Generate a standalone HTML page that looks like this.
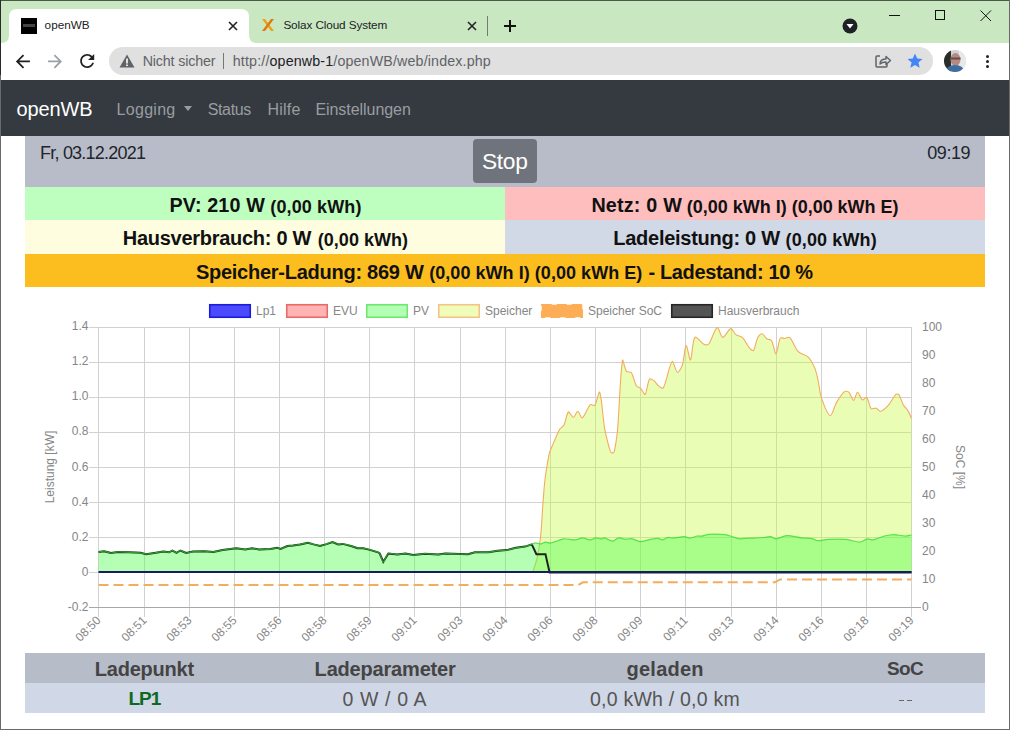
<!DOCTYPE html>
<html><head><meta charset="utf-8"><style>
*{box-sizing:border-box}
html,body{margin:0;padding:0;width:1010px;height:730px;overflow:hidden;background:#fff;font-family:"Liberation Sans",sans-serif}
.abs{position:absolute}
.t{position:absolute;line-height:1;white-space:pre;font-family:"Liberation Sans",sans-serif}
#tabs{left:0;top:0;width:1010px;height:43px;background:#c9e8c2}
#toolbar{left:0;top:43px;width:1010px;height:37px;background:#fff}
#omni{left:109px;top:47px;width:824px;height:28px;border-radius:14px;background:#dfe0df}
#nav{left:0;top:80px;width:1010px;height:56px;background:#343a40}
.chart{position:absolute;left:0;top:287px}
</style></head><body>
<div id="tabs" class="abs"></div>
<svg class="abs" style="left:0;top:0" width="260" height="44" viewBox="0 0 260 44">
<path d="M1,43 Q9,43 9,35 L9,17 Q9,9 17,9 L241,9 Q249,9 249,17 L249,35 Q249,43 257,43 Z" fill="#fff"/>
</svg>
<div class="abs" style="left:21px;top:18px;width:16px;height:16px;background:#000"><div class="abs" style="left:2px;top:6px;width:12px;height:3px;background:#444;filter:blur(0.7px)"></div></div>
<svg class="abs" style="left:228px;top:21px" width="10" height="10"><path d="M1,1 L9,9 M9,1 L1,9" stroke="#222" stroke-width="1.6"/></svg>
<svg class="abs" style="left:260px;top:17px" width="16" height="16" viewBox="0 0 16 16"><path d="M2,2 L5,2 L14,14 L11,14 Z" fill="#f0a010"/><path d="M14,2 L11,2 L2,14 L5,14 Z" fill="#e07808"/></svg>
<svg class="abs" style="left:467px;top:21px" width="10" height="10"><path d="M1,1 L9,9 M9,1 L1,9" stroke="#222" stroke-width="1.6"/></svg>
<div class="abs" style="left:487px;top:16px;width:1px;height:20px;background:#6e7e6a"></div>
<svg class="abs" style="left:503px;top:19px" width="14" height="14"><path d="M7,1 L7,13 M1,7 L13,7" stroke="#111" stroke-width="2"/></svg>
<svg class="abs" style="left:842px;top:18px" width="16" height="16"><circle cx="8" cy="8" r="7.5" fill="#202124"/><path d="M4.5,6 L11.5,6 L8,10.5 Z" fill="#fff"/></svg>
<div class="abs" style="left:889px;top:15px;width:11px;height:1px;background:#111"></div>
<div class="abs" style="left:935px;top:10px;width:10px;height:10px;border:1px solid #111"></div>
<svg class="abs" style="left:980px;top:10px" width="12" height="12"><path d="M0.5,0.5 L11,11 M11,0.5 L0.5,11" stroke="#111" stroke-width="1"/></svg>
<div id="toolbar" class="abs"></div>
<svg class="abs" style="left:0;top:43px" width="110" height="37" viewBox="0 43 110 37">
<g transform="translate(12.4,50.9) scale(0.875)"><path d="M20 11H7.83l5.59-5.59L12 4l-8 8 8 8 1.41-1.41L7.83 13H20v-2z" fill="#202124"/></g>
<g transform="translate(44.5,50.9) scale(0.875)"><path d="M12 4l-1.41 1.41L16.17 11H4v2h12.17l-5.58 5.59L12 20l8-8z" fill="#9aa0a6"/></g>
<g transform="translate(76.7,50.4) scale(0.875)"><path d="M17.65 6.35C16.2 4.9 14.21 4 12 4c-4.42 0-7.99 3.58-7.99 8s3.57 8 7.99 8c3.730 0 6.84-2.55 7.73-6h-2.08c-.82 2.33-3.04 4-5.65 4-3.31 0-6-2.690-6-6s2.69-6 6-6c1.66 0 3.14.69 4.22 1.78L13 11h7V4l-2.35 2.35z" fill="#202124"/></g>
</svg>
<div id="omni" class="abs"></div>
<svg class="abs" style="left:119px;top:54px" width="16" height="14" viewBox="0 0 16 14"><path d="M8,0.5 L15.5,13.5 L0.5,13.5 Z" fill="#5f6368"/><rect x="7.2" y="4.5" width="1.6" height="5" fill="#fff"/><rect x="7.2" y="10.5" width="1.6" height="1.6" fill="#fff"/></svg>
<div class="abs" style="left:223px;top:53px;width:1px;height:16px;background:#777"></div>
<svg class="abs" style="left:874px;top:52px" width="18" height="18" viewBox="0 0 18 18"><path d="M6,4 L3,4 Q2,4 2,5 L2,14 Q2,15 3,15 L12,15 Q13,15 13,14 L13,12" fill="none" stroke="#5f6368" stroke-width="1.5"/><path d="M6,12 Q6,7 12,7 L12,4.5 L16.5,8.5 L12,12.5 L12,10 Q8,10 6,12 Z" fill="none" stroke="#5f6368" stroke-width="1.4" stroke-linejoin="round"/></svg>
<svg class="abs" style="left:906px;top:52px" width="18" height="18" viewBox="0 0 18 18"><path d="M9,1.5 L11.2,6.6 L16.5,7 L12.4,10.5 L13.7,15.8 L9,12.9 L4.3,15.8 L5.6,10.5 L1.5,7 L6.8,6.6 Z" fill="#4285f4"/></svg>
<svg class="abs" style="left:944px;top:50px" width="22" height="22" viewBox="0 0 22 22"><defs><clipPath id="avc"><circle cx="11" cy="11" r="11"/></clipPath></defs><g clip-path="url(#avc)"><rect width="22" height="22" fill="#cfd2d4"/><rect x="0" y="0" width="7" height="22" fill="#2a2e2a"/><rect x="15" y="0" width="7" height="22" fill="#e8e8e8"/><ellipse cx="11.5" cy="9.5" rx="5" ry="6.5" fill="#b58a80"/><rect x="6.5" y="7.5" width="10" height="2" fill="#6a4a48"/><path d="M1,22 Q3,15 11,15 Q19,15 21,22 Z" fill="#3d6ea0"/></g></svg>
<div class="abs" style="left:986px;top:55px;width:3px;height:3px;border-radius:2px;background:#202124"></div>
<div class="abs" style="left:986px;top:60px;width:3px;height:3px;border-radius:2px;background:#202124"></div>
<div class="abs" style="left:986px;top:65px;width:3px;height:3px;border-radius:2px;background:#202124"></div>
<div id="nav" class="abs"></div>
<div class="abs" style="left:184px;top:106px;width:0;height:0;border-left:4.5px solid transparent;border-right:4.5px solid transparent;border-top:5px solid #9a9da0"></div>
<div class="abs" style="left:25px;top:136px;width:960px;height:51px;background:#b8bcc9"></div>
<div class="abs" style="left:473px;top:139px;width:64px;height:44px;border-radius:4px;background:#6f747c"></div>
<div class="t" style="left:482.0px;top:149.9px;font-size:22.75px;letter-spacing:-0.333px;color:#fff;">Stop</div>
<div class="abs" style="left:25px;top:187px;width:480px;height:33px;background:#befebe"></div>
<div class="abs" style="left:505px;top:187px;width:480px;height:33px;background:#febebe"></div>
<div class="abs" style="left:25px;top:220px;width:480px;height:34px;background:#fefddf"></div>
<div class="abs" style="left:505px;top:220px;width:480px;height:34px;background:#d1d8e6"></div>
<div class="abs" style="left:25px;top:254px;width:960px;height:33px;background:#fcbe1e"></div>
<div class="t" style="left:44.6px;top:19.4px;font-size:11.75px;letter-spacing:-0.0px;color:#202124;">openWB</div>
<div class="t" style="left:283.4px;top:19.4px;font-size:11.75px;letter-spacing:-0.112px;color:#202124;">Solax Cloud System</div>
<div class="t" style="left:142.7px;top:53.9px;font-size:14.25px;letter-spacing:-0.155px;color:#5f6368;">Nicht sicher</div>
<div class="t" style="left:232.8px;top:53.9px;font-size:14.25px;letter-spacing:0.149px;color:#5f6368;">http://<span style="color:#202124">openwb-1</span>/openWB/web/index.php</div>
<div class="t" style="left:16.4px;top:98.8px;font-size:20.0px;letter-spacing:-0.08px;color:#fff;">openWB</div>
<div class="t" style="left:116.6px;top:101.5px;font-size:16.0px;letter-spacing:0.283px;color:#9a9da0;">Logging</div>
<div class="t" style="left:207.7px;top:101.5px;font-size:16.0px;letter-spacing:-0.34px;color:#9a9da0;">Status</div>
<div class="t" style="left:267.6px;top:101.5px;font-size:16.0px;letter-spacing:0.175px;color:#9a9da0;">Hilfe</div>
<div class="t" style="left:315.4px;top:101.5px;font-size:16.0px;letter-spacing:-0.05px;color:#9a9da0;">Einstellungen</div>
<div class="t" style="left:40.0px;top:144.0px;font-size:18.0px;letter-spacing:-0.777px;color:#212529;">Fr, 03.12.2021</div>
<div class="t" style="left:927.3px;top:144.0px;font-size:18.0px;letter-spacing:-0.45px;color:#212529;">09:19</div>
<div class="t" style="left:169.4px;top:196.4px;font-size:19.75px;letter-spacing:0.125px;color:#111;font-weight:bold;">PV: 210 W</div>
<div class="t" style="left:270.3px;top:197.8px;font-size:18.0px;letter-spacing:0.122px;color:#111;font-weight:bold;">(0,00 kWh)</div>
<div class="t" style="left:591.4px;top:196.4px;font-size:19.75px;letter-spacing:0.188px;color:#111;font-weight:bold;">Netz: 0 W</div>
<div class="t" style="left:686.8px;top:197.8px;font-size:18.0px;letter-spacing:-0.012px;color:#111;font-weight:bold;">(0,00 kWh I) (0,00 kWh E)</div>
<div class="t" style="left:122.8px;top:228.3px;font-size:20.0px;letter-spacing:-0.282px;color:#111;font-weight:bold;">Hausverbrauch: 0 W</div>
<div class="t" style="left:317.7px;top:230.8px;font-size:18.0px;letter-spacing:0.044px;color:#111;font-weight:bold;">(0,00 kWh)</div>
<div class="t" style="left:613.3px;top:228.3px;font-size:20.0px;letter-spacing:-0.269px;color:#111;font-weight:bold;">Ladeleistung: 0 W</div>
<div class="t" style="left:785.5px;top:230.8px;font-size:18.0px;letter-spacing:0.133px;color:#111;font-weight:bold;">(0,00 kWh)</div>
<div class="t" style="left:195.9px;top:261.8px;font-size:20.0px;letter-spacing:-0.257px;color:#111;font-weight:bold;">Speicher-Ladung: 869 W</div>
<div class="t" style="left:429.2px;top:264.2px;font-size:18.0px;letter-spacing:0.046px;color:#111;font-weight:bold;">(0,00 kWh I) (0,00 kWh E)</div>
<div class="t" style="left:648.4px;top:261.8px;font-size:20.0px;letter-spacing:-0.337px;color:#111;font-weight:bold;">- Ladestand: 10 %</div>
<svg class="chart" width="1010" height="366" viewBox="0 287 1010 366">
<g font-family="Liberation Sans" font-size="12" fill="#868686">
<rect x="209.75" y="304.75" width="40.5" height="12.5" fill="#4b4bfd" stroke="#1c1cd8" stroke-width="1.6"/>
<text x="256" y="315">Lp1</text>
<rect x="286.75" y="304.75" width="40.5" height="12.5" fill="#ffb3b3" stroke="#ea6a6a" stroke-width="1.6"/>
<text x="333" y="315">EVU</text>
<rect x="366.75" y="304.75" width="40.5" height="12.5" fill="#b3ffb3" stroke="#6ee86e" stroke-width="1.6"/>
<text x="413" y="315">PV</text>
<rect x="438.75" y="304.75" width="40.5" height="12.5" fill="#effdb8" stroke="#f2c489" stroke-width="1.6"/>
<text x="485" y="315">Speicher</text>
<rect x="541.75" y="304.75" width="40.5" height="12.5" fill="#fdad55" stroke="#fdad55" stroke-width="1.6" stroke-dasharray="10,5"/>
<text x="588" y="315">Speicher SoC</text>
<rect x="671.75" y="304.75" width="40.5" height="12.5" fill="#545454" stroke="#262626" stroke-width="1.6"/>
<text x="718" y="315">Hausverbrauch</text>
</g>
<g stroke="#d2d2d2" stroke-width="1"><line x1="98.5" y1="327" x2="98.5" y2="617" /><line x1="144.5" y1="327" x2="144.5" y2="617" /><line x1="189.5" y1="327" x2="189.5" y2="617" /><line x1="234.5" y1="327" x2="234.5" y2="617" /><line x1="279.5" y1="327" x2="279.5" y2="617" /><line x1="324.5" y1="327" x2="324.5" y2="617" /><line x1="369.5" y1="327" x2="369.5" y2="617" /><line x1="414.5" y1="327" x2="414.5" y2="617" /><line x1="460.5" y1="327" x2="460.5" y2="617" /><line x1="505.5" y1="327" x2="505.5" y2="617" /><line x1="550.5" y1="327" x2="550.5" y2="617" /><line x1="595.5" y1="327" x2="595.5" y2="617" /><line x1="640.5" y1="327" x2="640.5" y2="617" /><line x1="685.5" y1="327" x2="685.5" y2="617" /><line x1="731.5" y1="327" x2="731.5" y2="617" /><line x1="776.5" y1="327" x2="776.5" y2="617" /><line x1="821.5" y1="327" x2="821.5" y2="617" /><line x1="866.5" y1="327" x2="866.5" y2="617" /><line x1="911.5" y1="327" x2="911.5" y2="617" /><line x1="89" y1="327.5" x2="911.5" y2="327.5" /><line x1="89" y1="362.5" x2="911.5" y2="362.5" /><line x1="89" y1="397.5" x2="911.5" y2="397.5" /><line x1="89" y1="432.5" x2="911.5" y2="432.5" /><line x1="89" y1="467.5" x2="911.5" y2="467.5" /><line x1="89" y1="502.5" x2="911.5" y2="502.5" /><line x1="89" y1="537.5" x2="911.5" y2="537.5" /><line x1="89" y1="572.5" x2="911.5" y2="572.5" /><line x1="89" y1="607.5" x2="911.5" y2="607.5" /></g>
<line x1="89" y1="607.5" x2="921" y2="607.5" stroke="#a8a8a8" stroke-width="1"/>
<path d="M532.9,572.0 C534.2,567.6 536.3,561.8 537.3,557.3 C538.6,551.1 539.9,542.8 540.6,536.5 C541.6,527.3 542.1,515.0 542.8,505.8 C543.4,497.9 544.0,487.4 545.0,479.5 C546.0,471.6 547.8,461.0 549.3,453.2 C549.5,452.0 550.3,450.5 550.8,449.3 C552.0,446.5 553.6,442.8 554.8,440.0 C556.2,436.8 557.8,432.4 559.6,429.5 C560.6,427.9 563.2,426.7 564.0,425.0 C565.8,421.4 566.6,413.5 568.4,412.0 C569.4,411.2 572.0,417.6 573.4,417.5 C574.8,417.4 576.5,411.2 577.8,411.3 C579.1,411.4 580.9,418.6 582.2,417.9 C584.7,416.6 587.4,407.6 590.3,404.7 C591.1,403.9 594.0,406.3 594.7,405.4 C596.8,402.5 598.9,390.3 599.7,392.2 C601.8,397.2 602.8,417.6 604.6,428.4 C605.6,434.0 607.5,441.5 609.0,447.0 C609.5,448.7 610.1,451.4 611.1,452.5 C611.6,453.0 613.5,453.1 613.8,452.5 C615.0,450.0 615.5,445.2 616.0,442.0 C616.7,437.9 617.4,432.5 617.7,428.4 C619.3,408.0 620.2,375.0 622.5,360.4 C622.9,357.9 624.6,368.8 626.5,371.4 C627.3,372.5 630.5,371.4 631.3,372.5 C633.5,375.7 634.3,382.2 636.4,385.7 C637.2,387.0 639.6,387.4 640.7,388.5 C642.2,390.0 644.3,395.3 645.1,394.4 C646.9,392.5 647.5,382.3 649.5,379.1 C650.1,378.2 652.8,379.8 653.9,380.6 C655.5,381.8 656.7,384.5 658.3,385.7 C659.6,386.7 662.6,389.1 663.3,387.9 C666.8,381.8 669.2,364.7 672.1,361.5 C673.4,360.1 675.6,371.9 677.4,372.5 C678.7,372.9 681.6,367.4 682.4,364.8 C684.2,359.3 684.7,346.3 686.1,345.5 C687.2,344.9 689.5,361.0 690.5,360.0 C692.1,358.5 692.2,340.5 694.9,337.4 C696.3,335.8 701.3,343.2 704.3,344.6 C705.4,345.1 708.0,345.0 708.7,344.0 C711.8,339.9 714.6,328.7 717.2,327.5 C718.8,326.7 720.7,337.2 722.7,337.4 C724.8,337.6 728.4,329.1 730.8,328.6 C732.4,328.3 734.0,333.2 735.8,334.6 C737.5,335.9 740.9,336.0 742.4,337.4 C744.9,339.8 746.7,344.6 749.0,347.3 C750.0,348.6 752.7,351.4 753.4,350.6 C755.3,348.5 755.9,341.0 757.8,337.4 C758.6,335.9 760.9,333.5 762.1,333.7 C763.5,333.9 765.0,337.4 766.5,338.5 C767.8,339.5 770.8,339.4 771.6,340.7 C773.6,344.0 774.8,354.3 776.0,353.9 C777.4,353.5 778.3,341.8 780.4,338.1 C780.9,337.1 783.4,338.6 784.7,338.5 C786.2,338.4 788.7,336.5 789.6,337.4 C792.7,340.4 795.0,348.2 798.3,351.7 C800.5,354.1 805.9,354.8 808.2,357.1 C810.8,359.7 813.3,364.6 814.8,368.1 C816.2,371.5 817.2,376.4 818.0,380.0 C819.2,385.3 819.7,392.6 821.4,397.7 C823.3,403.3 827.5,414.9 830.1,415.7 C832.1,416.3 834.4,406.0 836.7,402.1 C838.7,398.8 841.7,393.8 844.4,391.6 C845.3,390.8 847.9,391.4 848.8,392.2 C850.7,394.0 852.3,400.4 853.6,400.4 C854.9,400.4 856.2,392.3 857.5,392.2 C858.8,392.1 860.6,398.9 862.4,399.9 C863.4,400.4 866.0,396.5 866.8,397.3 C868.6,399.2 869.1,406.4 871.1,408.7 C871.9,409.7 874.8,407.8 876.2,408.2 C877.7,408.6 879.3,411.6 880.6,411.3 C882.9,410.8 886.3,407.5 888.2,405.4 C890.9,402.4 893.3,397.1 895.9,394.4 C896.5,393.8 898.3,393.8 898.8,394.4 C900.5,396.9 901.6,401.8 903.2,404.7 C904.3,406.7 906.8,408.9 908.0,410.9 C909.3,413.0 910.5,416.2 911.5,418.5 L911.5,572.5 L532.9,572.5 Z" fill="rgba(200,250,60,0.38)" stroke="none"/>
<path d="M532.9,572.0 C534.2,567.6 536.3,561.8 537.3,557.3 C538.6,551.1 539.9,542.8 540.6,536.5 C541.6,527.3 542.1,515.0 542.8,505.8 C543.4,497.9 544.0,487.4 545.0,479.5 C546.0,471.6 547.8,461.0 549.3,453.2 C549.5,452.0 550.3,450.5 550.8,449.3 C552.0,446.5 553.6,442.8 554.8,440.0 C556.2,436.8 557.8,432.4 559.6,429.5 C560.6,427.9 563.2,426.7 564.0,425.0 C565.8,421.4 566.6,413.5 568.4,412.0 C569.4,411.2 572.0,417.6 573.4,417.5 C574.8,417.4 576.5,411.2 577.8,411.3 C579.1,411.4 580.9,418.6 582.2,417.9 C584.7,416.6 587.4,407.6 590.3,404.7 C591.1,403.9 594.0,406.3 594.7,405.4 C596.8,402.5 598.9,390.3 599.7,392.2 C601.8,397.2 602.8,417.6 604.6,428.4 C605.6,434.0 607.5,441.5 609.0,447.0 C609.5,448.7 610.1,451.4 611.1,452.5 C611.6,453.0 613.5,453.1 613.8,452.5 C615.0,450.0 615.5,445.2 616.0,442.0 C616.7,437.9 617.4,432.5 617.7,428.4 C619.3,408.0 620.2,375.0 622.5,360.4 C622.9,357.9 624.6,368.8 626.5,371.4 C627.3,372.5 630.5,371.4 631.3,372.5 C633.5,375.7 634.3,382.2 636.4,385.7 C637.2,387.0 639.6,387.4 640.7,388.5 C642.2,390.0 644.3,395.3 645.1,394.4 C646.9,392.5 647.5,382.3 649.5,379.1 C650.1,378.2 652.8,379.8 653.9,380.6 C655.5,381.8 656.7,384.5 658.3,385.7 C659.6,386.7 662.6,389.1 663.3,387.9 C666.8,381.8 669.2,364.7 672.1,361.5 C673.4,360.1 675.6,371.9 677.4,372.5 C678.7,372.9 681.6,367.4 682.4,364.8 C684.2,359.3 684.7,346.3 686.1,345.5 C687.2,344.9 689.5,361.0 690.5,360.0 C692.1,358.5 692.2,340.5 694.9,337.4 C696.3,335.8 701.3,343.2 704.3,344.6 C705.4,345.1 708.0,345.0 708.7,344.0 C711.8,339.9 714.6,328.7 717.2,327.5 C718.8,326.7 720.7,337.2 722.7,337.4 C724.8,337.6 728.4,329.1 730.8,328.6 C732.4,328.3 734.0,333.2 735.8,334.6 C737.5,335.9 740.9,336.0 742.4,337.4 C744.9,339.8 746.7,344.6 749.0,347.3 C750.0,348.6 752.7,351.4 753.4,350.6 C755.3,348.5 755.9,341.0 757.8,337.4 C758.6,335.9 760.9,333.5 762.1,333.7 C763.5,333.9 765.0,337.4 766.5,338.5 C767.8,339.5 770.8,339.4 771.6,340.7 C773.6,344.0 774.8,354.3 776.0,353.9 C777.4,353.5 778.3,341.8 780.4,338.1 C780.9,337.1 783.4,338.6 784.7,338.5 C786.2,338.4 788.7,336.5 789.6,337.4 C792.7,340.4 795.0,348.2 798.3,351.7 C800.5,354.1 805.9,354.8 808.2,357.1 C810.8,359.7 813.3,364.6 814.8,368.1 C816.2,371.5 817.2,376.4 818.0,380.0 C819.2,385.3 819.7,392.6 821.4,397.7 C823.3,403.3 827.5,414.9 830.1,415.7 C832.1,416.3 834.4,406.0 836.7,402.1 C838.7,398.8 841.7,393.8 844.4,391.6 C845.3,390.8 847.9,391.4 848.8,392.2 C850.7,394.0 852.3,400.4 853.6,400.4 C854.9,400.4 856.2,392.3 857.5,392.2 C858.8,392.1 860.6,398.9 862.4,399.9 C863.4,400.4 866.0,396.5 866.8,397.3 C868.6,399.2 869.1,406.4 871.1,408.7 C871.9,409.7 874.8,407.8 876.2,408.2 C877.7,408.6 879.3,411.6 880.6,411.3 C882.9,410.8 886.3,407.5 888.2,405.4 C890.9,402.4 893.3,397.1 895.9,394.4 C896.5,393.8 898.3,393.8 898.8,394.4 C900.5,396.9 901.6,401.8 903.2,404.7 C904.3,406.7 906.8,408.9 908.0,410.9 C909.3,413.0 910.5,416.2 911.5,418.5" fill="none" stroke="#f2ad5c" stroke-width="1.1"/>
<path d="M98.5,551.9 C100.2,551.7 102.4,551.1 104.1,551.2 C106.2,551.4 108.9,552.9 111.0,553.0 C113.0,553.1 115.7,552.0 117.8,551.9 C121.2,551.8 125.8,552.2 129.2,552.3 C132.6,552.4 137.1,552.4 140.5,552.8 C142.2,553.0 144.5,554.2 146.2,554.2 C148.6,554.2 151.8,553.4 154.2,553.0 C156.9,552.6 160.6,551.7 163.3,551.6 C165.0,551.5 167.3,552.5 169.0,552.3 C170.1,552.2 171.4,550.6 172.4,550.7 C173.6,550.8 175.3,552.8 176.5,552.8 C177.7,552.8 179.2,550.5 180.4,550.5 C182.1,550.5 184.3,552.8 186.1,553.0 C188.1,553.2 190.8,551.8 192.9,551.6 C196.3,551.3 200.9,551.2 204.3,551.2 C207.0,551.2 210.7,552.1 213.4,551.9 C216.2,551.7 219.8,550.5 222.5,550.1 C226.6,549.4 232.1,548.3 236.2,548.2 C238.9,548.1 242.6,549.4 245.3,549.4 C247.3,549.4 250.1,548.2 252.1,548.2 C254.2,548.2 256.9,549.5 259.0,549.6 C262.4,549.8 267.0,549.4 270.4,549.1 C272.5,548.9 275.2,547.8 277.2,547.8 C278.2,547.8 279.6,549.1 280.6,548.9 C282.7,548.5 285.3,546.6 287.4,546.0 C289.0,545.6 291.4,545.7 293.1,545.5 C295.2,545.2 297.9,544.8 300.0,544.4 C302.4,544.0 305.5,542.8 307.9,542.8 C309.6,542.8 311.9,543.9 313.6,544.4 C315.5,544.9 318.1,546.0 320.0,546.0 C321.7,546.0 324.0,544.9 325.7,544.4 C327.8,543.8 330.5,542.1 332.5,542.1 C334.2,542.1 336.4,544.1 338.2,544.4 C339.5,544.6 341.4,543.7 342.8,543.9 C345.6,544.3 349.2,545.4 351.9,546.2 C353.6,546.7 355.8,547.9 357.6,548.2 C359.3,548.5 361.6,548.0 363.3,548.2 C365.0,548.4 367.3,549.1 369.0,549.6 C371.7,550.4 375.4,551.3 378.1,552.3 C378.7,552.5 379.4,553.0 379.7,553.5 C381.0,555.9 382.1,561.9 383.3,561.9 C384.6,561.9 386.1,554.6 388.3,553.5 C390.3,552.4 394.7,554.6 397.4,554.6 C399.8,554.6 403.0,553.4 405.4,553.5 C407.8,553.6 411.0,555.1 413.4,555.1 C416.8,555.1 421.4,553.8 424.8,553.7 C428.9,553.6 434.3,554.6 438.4,554.6 C440.5,554.6 443.2,553.5 445.3,553.5 C452.1,553.4 461.2,554.5 468.0,554.2 C470.1,554.1 472.8,552.5 474.9,552.3 C478.9,551.9 484.4,552.6 488.5,552.3 C491.3,552.1 494.9,551.0 497.6,550.7 C500.3,550.4 504.0,550.5 506.7,550.1 C509.5,549.7 513.1,548.3 515.9,547.8 C518.6,547.3 522.3,547.2 525.0,546.6 C527.1,546.2 529.8,545.1 531.8,544.4 C532.9,544.0 534.1,542.9 535.2,542.8 C536.9,542.7 539.2,544.0 540.9,543.9 C542.3,543.8 544.1,542.2 545.5,542.1 C547.0,542.0 549.1,543.3 550.6,543.0 C554.6,542.3 559.8,539.3 563.8,538.8 C567.1,538.4 571.7,540.0 575.1,539.8 C577.4,539.7 580.4,537.9 582.6,537.9 C584.9,537.9 587.9,539.8 590.1,539.8 C591.8,539.8 594.1,538.1 595.8,537.9 C597.4,537.8 599.7,538.8 601.4,538.8 C602.3,538.8 603.4,537.7 604.3,537.9 C606.8,538.4 610.3,541.1 612.7,541.1 C614.5,541.1 616.6,538.2 618.4,537.9 C620.5,537.6 623.6,539.1 625.9,539.2 C627.9,539.3 630.6,538.5 632.5,538.8 C634.8,539.2 637.7,541.5 640.0,541.6 C642.5,541.8 645.9,540.3 648.5,539.8 C651.3,539.3 655.1,538.4 657.9,538.4 C659.3,538.4 661.2,539.9 662.6,539.8 C664.3,539.6 666.5,537.6 668.2,537.3 C669.6,537.1 671.5,538.3 672.9,538.2 C676.3,538.1 680.8,536.6 684.2,536.6 C685.9,536.6 688.1,538.2 689.8,538.1 C692.1,538.0 695.1,536.4 697.4,536.0 C698.5,535.8 700.0,536.4 701.1,536.2 C703.4,535.9 706.4,534.4 708.7,534.3 C713.7,534.0 720.6,534.2 725.6,534.7 C727.8,534.9 730.6,536.3 732.8,536.9 C734.8,537.5 737.4,538.6 739.4,538.8 C742.2,539.0 746.0,538.3 748.8,538.2 C753.3,538.0 759.4,537.8 763.9,537.5 C765.9,537.4 768.5,536.4 770.4,536.6 C772.2,536.8 774.4,538.9 776.1,538.8 C779.2,538.6 783.2,535.7 786.4,535.6 C790.9,535.4 797.0,537.3 801.5,537.9 C804.9,538.3 809.5,538.2 812.8,538.8 C814.3,539.1 816.0,540.6 817.5,540.7 C820.5,540.8 824.7,539.5 827.8,539.4 C833.4,539.1 841.0,538.9 846.6,539.4 C850.6,539.8 855.9,542.3 859.8,542.2 C862.2,542.1 865.0,539.2 867.3,538.8 C868.9,538.5 871.3,540.1 873.0,539.8 C876.4,539.2 880.8,536.9 884.3,536.0 C887.1,535.3 890.9,534.5 893.7,534.5 C897.1,534.5 901.6,535.9 905.0,536.0 C907.0,536.1 909.5,535.3 911.5,535.0 L911.5,572.5 L98.5,572.5 Z" fill="rgba(80,255,78,0.43)" stroke="none"/>
<path d="M98.5,551.9 L104.1,551.2 L111.0,553.0 L117.8,551.9 L129.2,552.3 L140.5,552.8 L146.2,554.2 L154.2,553.0 L163.3,551.6 L169.0,552.3 L172.4,550.7 L176.5,552.8 L180.4,550.5 L186.1,553.0 L192.9,551.6 L204.3,551.2 L213.4,551.9 L222.5,550.1 L236.2,548.2 L245.3,549.4 L252.1,548.2 L259.0,549.6 L270.4,549.1 L277.2,547.8 L280.6,548.9 L287.4,546.0 L293.1,545.5 L300.0,544.4 L307.9,542.8 L313.6,544.4 L320.0,546.0 L325.7,544.4 L332.5,542.1 L338.2,544.4 L342.8,543.9 L351.9,546.2 L357.6,548.2 L363.3,548.2 L369.0,549.6 L378.1,552.3 L379.7,553.5 L383.3,561.9 L388.3,553.5 L397.4,554.6 L405.4,553.5 L413.4,555.1 L424.8,553.7 L438.4,554.6 L445.3,553.5 L468.0,554.2 L474.9,552.3 L488.5,552.3 L497.6,550.7 L506.7,550.1 L515.9,547.8 L525.0,546.6 L531.8,544.4 L536.4,554.2 L545.5,554.2 L549.6,572.5 L911.5,572.5" fill="none" stroke="#222" stroke-width="2"/>
<path d="M98.5,551.9 C100.2,551.7 102.4,551.1 104.1,551.2 C106.2,551.4 108.9,552.9 111.0,553.0 C113.0,553.1 115.7,552.0 117.8,551.9 C121.2,551.8 125.8,552.2 129.2,552.3 C132.6,552.4 137.1,552.4 140.5,552.8 C142.2,553.0 144.5,554.2 146.2,554.2 C148.6,554.2 151.8,553.4 154.2,553.0 C156.9,552.6 160.6,551.7 163.3,551.6 C165.0,551.5 167.3,552.5 169.0,552.3 C170.1,552.2 171.4,550.6 172.4,550.7 C173.6,550.8 175.3,552.8 176.5,552.8 C177.7,552.8 179.2,550.5 180.4,550.5 C182.1,550.5 184.3,552.8 186.1,553.0 C188.1,553.2 190.8,551.8 192.9,551.6 C196.3,551.3 200.9,551.2 204.3,551.2 C207.0,551.2 210.7,552.1 213.4,551.9 C216.2,551.7 219.8,550.5 222.5,550.1 C226.6,549.4 232.1,548.3 236.2,548.2 C238.9,548.1 242.6,549.4 245.3,549.4 C247.3,549.4 250.1,548.2 252.1,548.2 C254.2,548.2 256.9,549.5 259.0,549.6 C262.4,549.8 267.0,549.4 270.4,549.1 C272.5,548.9 275.2,547.8 277.2,547.8 C278.2,547.8 279.6,549.1 280.6,548.9 C282.7,548.5 285.3,546.6 287.4,546.0 C289.0,545.6 291.4,545.7 293.1,545.5 C295.2,545.2 297.9,544.8 300.0,544.4 C302.4,544.0 305.5,542.8 307.9,542.8 C309.6,542.8 311.9,543.9 313.6,544.4 C315.5,544.9 318.1,546.0 320.0,546.0 C321.7,546.0 324.0,544.9 325.7,544.4 C327.8,543.8 330.5,542.1 332.5,542.1 C334.2,542.1 336.4,544.1 338.2,544.4 C339.5,544.6 341.4,543.7 342.8,543.9 C345.6,544.3 349.2,545.4 351.9,546.2 C353.6,546.7 355.8,547.9 357.6,548.2 C359.3,548.5 361.6,548.0 363.3,548.2 C365.0,548.4 367.3,549.1 369.0,549.6 C371.7,550.4 375.4,551.3 378.1,552.3 C378.7,552.5 379.4,553.0 379.7,553.5 C381.0,555.9 382.1,561.9 383.3,561.9 C384.6,561.9 386.1,554.6 388.3,553.5 C390.3,552.4 394.7,554.6 397.4,554.6 C399.8,554.6 403.0,553.4 405.4,553.5 C407.8,553.6 411.0,555.1 413.4,555.1 C416.8,555.1 421.4,553.8 424.8,553.7 C428.9,553.6 434.3,554.6 438.4,554.6 C440.5,554.6 443.2,553.5 445.3,553.5 C452.1,553.4 461.2,554.5 468.0,554.2 C470.1,554.1 472.8,552.5 474.9,552.3 C478.9,551.9 484.4,552.6 488.5,552.3 C491.3,552.1 494.9,551.0 497.6,550.7 C500.3,550.4 504.0,550.5 506.7,550.1 C509.5,549.7 513.1,548.3 515.9,547.8 C518.6,547.3 522.3,547.2 525.0,546.6 C527.1,546.2 529.8,545.1 531.8,544.4 C532.9,544.0 534.1,542.9 535.2,542.8 C536.9,542.7 539.2,544.0 540.9,543.9 C542.3,543.8 544.1,542.2 545.5,542.1 C547.0,542.0 549.1,543.3 550.6,543.0 C554.6,542.3 559.8,539.3 563.8,538.8 C567.1,538.4 571.7,540.0 575.1,539.8 C577.4,539.7 580.4,537.9 582.6,537.9 C584.9,537.9 587.9,539.8 590.1,539.8 C591.8,539.8 594.1,538.1 595.8,537.9 C597.4,537.8 599.7,538.8 601.4,538.8 C602.3,538.8 603.4,537.7 604.3,537.9 C606.8,538.4 610.3,541.1 612.7,541.1 C614.5,541.1 616.6,538.2 618.4,537.9 C620.5,537.6 623.6,539.1 625.9,539.2 C627.9,539.3 630.6,538.5 632.5,538.8 C634.8,539.2 637.7,541.5 640.0,541.6 C642.5,541.8 645.9,540.3 648.5,539.8 C651.3,539.3 655.1,538.4 657.9,538.4 C659.3,538.4 661.2,539.9 662.6,539.8 C664.3,539.6 666.5,537.6 668.2,537.3 C669.6,537.1 671.5,538.3 672.9,538.2 C676.3,538.1 680.8,536.6 684.2,536.6 C685.9,536.6 688.1,538.2 689.8,538.1 C692.1,538.0 695.1,536.4 697.4,536.0 C698.5,535.8 700.0,536.4 701.1,536.2 C703.4,535.9 706.4,534.4 708.7,534.3 C713.7,534.0 720.6,534.2 725.6,534.7 C727.8,534.9 730.6,536.3 732.8,536.9 C734.8,537.5 737.4,538.6 739.4,538.8 C742.2,539.0 746.0,538.3 748.8,538.2 C753.3,538.0 759.4,537.8 763.9,537.5 C765.9,537.4 768.5,536.4 770.4,536.6 C772.2,536.8 774.4,538.9 776.1,538.8 C779.2,538.6 783.2,535.7 786.4,535.6 C790.9,535.4 797.0,537.3 801.5,537.9 C804.9,538.3 809.5,538.2 812.8,538.8 C814.3,539.1 816.0,540.6 817.5,540.7 C820.5,540.8 824.7,539.5 827.8,539.4 C833.4,539.1 841.0,538.9 846.6,539.4 C850.6,539.8 855.9,542.3 859.8,542.2 C862.2,542.1 865.0,539.2 867.3,538.8 C868.9,538.5 871.3,540.1 873.0,539.8 C876.4,539.2 880.8,536.9 884.3,536.0 C887.1,535.3 890.9,534.5 893.7,534.5 C897.1,534.5 901.6,535.9 905.0,536.0 C907.0,536.1 909.5,535.3 911.5,535.0" fill="none" stroke="rgba(40,215,40,0.7)" stroke-width="1.25"/>
<path d="M98.5,585.1 L578.0,585.1 L583.0,582.3 L775.0,582.3 L780.0,579.5 L911.5,579.5" fill="none" stroke="#f3ad5c" stroke-width="2" stroke-dasharray="10,5"/>
<line x1="98.5" y1="572" x2="911.5" y2="572" stroke="#191a62" stroke-width="2"/>
<g font-family="Liberation Sans" font-size="12" fill="#868686"><text x="88.5" y="329.9" text-anchor="end">1.4</text><text x="88.5" y="365.0" text-anchor="end">1.2</text><text x="88.5" y="400.2" text-anchor="end">1.0</text><text x="88.5" y="435.3" text-anchor="end">0.8</text><text x="88.5" y="470.5" text-anchor="end">0.6</text><text x="88.5" y="505.6" text-anchor="end">0.4</text><text x="88.5" y="540.7" text-anchor="end">0.2</text><text x="88.5" y="575.9" text-anchor="end">0</text><text x="88.5" y="611.0" text-anchor="end">-0.2</text><text x="922" y="610.5">0</text><text x="922" y="582.5">10</text><text x="922" y="554.5">20</text><text x="922" y="526.5">30</text><text x="922" y="498.5">40</text><text x="922" y="470.5">50</text><text x="922" y="442.5">60</text><text x="922" y="414.5">70</text><text x="922" y="386.5">80</text><text x="922" y="358.5">90</text><text x="922" y="330.5">100</text><text transform="translate(101.5,621.1) rotate(-45)" text-anchor="end">08:50</text><text transform="translate(147.5,621.1) rotate(-45)" text-anchor="end">08:51</text><text transform="translate(192.5,621.1) rotate(-45)" text-anchor="end">08:53</text><text transform="translate(237.5,621.1) rotate(-45)" text-anchor="end">08:55</text><text transform="translate(282.5,621.1) rotate(-45)" text-anchor="end">08:56</text><text transform="translate(327.5,621.1) rotate(-45)" text-anchor="end">08:58</text><text transform="translate(372.5,621.1) rotate(-45)" text-anchor="end">08:59</text><text transform="translate(417.5,621.1) rotate(-45)" text-anchor="end">09:01</text><text transform="translate(463.5,621.1) rotate(-45)" text-anchor="end">09:03</text><text transform="translate(508.5,621.1) rotate(-45)" text-anchor="end">09:04</text><text transform="translate(553.5,621.1) rotate(-45)" text-anchor="end">09:06</text><text transform="translate(598.5,621.1) rotate(-45)" text-anchor="end">09:08</text><text transform="translate(643.5,621.1) rotate(-45)" text-anchor="end">09:09</text><text transform="translate(688.5,621.1) rotate(-45)" text-anchor="end">09:11</text><text transform="translate(734.5,621.1) rotate(-45)" text-anchor="end">09:13</text><text transform="translate(779.5,621.1) rotate(-45)" text-anchor="end">09:14</text><text transform="translate(824.5,621.1) rotate(-45)" text-anchor="end">09:16</text><text transform="translate(869.5,621.1) rotate(-45)" text-anchor="end">09:18</text><text transform="translate(914.5,621.1) rotate(-45)" text-anchor="end">09:19</text>
<text transform="translate(54,467) rotate(-90)" text-anchor="middle">Leistung [kW]</text>
<text transform="translate(955.5,467) rotate(90)" text-anchor="middle">SoC [%]</text>
</g>
</svg>
<div class="abs" style="left:25px;top:653px;width:960px;height:30px;background:#b7bcc9"></div>
<div class="abs" style="left:25px;top:683px;width:960px;height:30px;background:#d0d7e6"></div>
<div class="t" style="left:94.8px;top:658.9px;font-size:20.0px;letter-spacing:-0.225px;color:#444;font-weight:bold;">Ladepunkt</div>
<div class="t" style="left:314.6px;top:658.9px;font-size:20.0px;letter-spacing:-0.183px;color:#444;font-weight:bold;">Ladeparameter</div>
<div class="t" style="left:626.5px;top:658.9px;font-size:20.0px;letter-spacing:0.25px;color:#444;font-weight:bold;">geladen</div>
<div class="t" style="left:887.0px;top:658.9px;font-size:19.0px;letter-spacing:-0.7px;color:#444;font-weight:bold;">SoC</div>
<div class="t" style="left:128.5px;top:688.6px;font-size:19.0px;letter-spacing:-1.05px;color:#0d6a22;font-weight:bold;">LP1</div>
<div class="t" style="left:342.4px;top:689.6px;font-size:19.5px;letter-spacing:0.638px;color:#555;">0 W / 0 A</div>
<div class="t" style="left:590.0px;top:689.6px;font-size:19.5px;letter-spacing:0.227px;color:#555;">0,0 kWh / 0,0 km</div>
<div class="abs" style="left:898.5px;top:699.5px;width:5.5px;height:1.6px;background:#666"></div><div class="abs" style="left:906.5px;top:699.5px;width:5.5px;height:1.6px;background:#666"></div>
<div class="abs" style="left:0;top:0;width:1010px;height:1px;background:#4a5a44"></div>
<div class="abs" style="left:0;top:0;width:1px;height:730px;background:#6a6a6a"></div>
<div class="abs" style="left:0;top:0;width:1px;height:75px;background:#2a2a2a"></div>
<div class="abs" style="left:1009px;top:0;width:1px;height:730px;background:#6a6a6a"></div>
<div class="abs" style="left:0;top:729px;width:1010px;height:1px;background:#6a6a6a"></div>
</body></html>
